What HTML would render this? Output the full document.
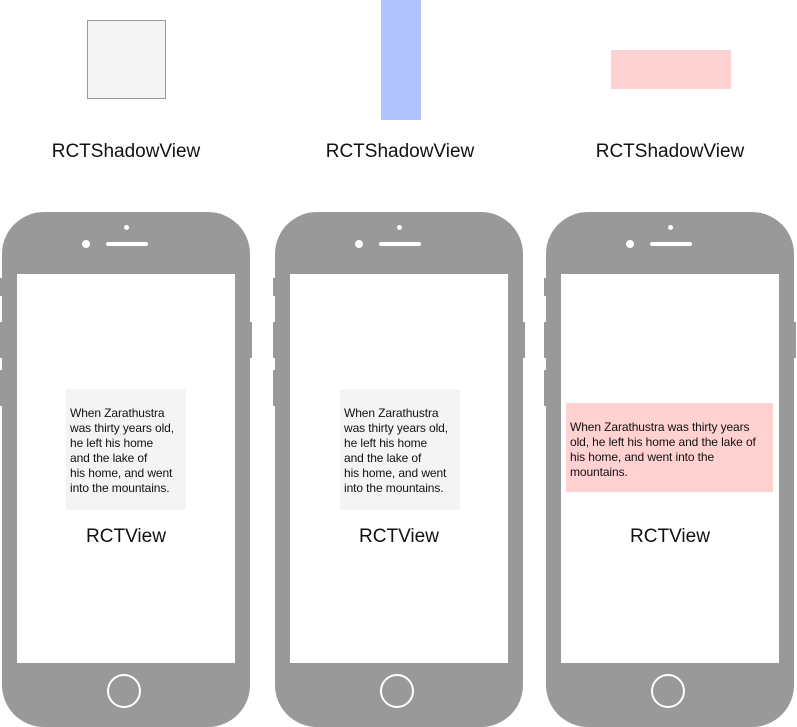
<!DOCTYPE html><html><head><style>
body{margin:0;width:797px;height:727px;background:#fff;position:relative;overflow:hidden;font-family:"Liberation Sans",sans-serif;color:#111}
.a{position:absolute}
.lbl{position:absolute;font-size:19px;width:200px;text-align:center;line-height:22px}
.ph{position:absolute;top:212px;width:248px;height:515px;background:#999;border-radius:42px}
.scr{position:absolute;left:15px;top:62px;width:218px;height:389px;background:#fff}
.home{position:absolute;left:105px;top:462px;width:34px;height:34px;border:2px solid #fff;border-radius:50%;box-sizing:border-box}
.cam{position:absolute;left:80px;top:28px;width:8px;height:8px;border-radius:50%;background:#fff}
.spk{position:absolute;left:104px;top:30px;width:42px;height:4px;border-radius:2px;background:#fff}
.dot{position:absolute;left:122px;top:13px;width:5px;height:5px;border-radius:50%;background:#fff}
.btn{position:absolute;width:3px;background:#999}
.txt{position:absolute;font-size:12px;line-height:15px;padding:17px 3px 0 4px;box-sizing:border-box;letter-spacing:-0.1px}
</style></head><body>
<div class="a" style="left:87px;top:20px;width:79px;height:79px;background:#f4f4f4;border:1px solid #999;box-sizing:border-box"></div>
<div class="a" style="left:381px;top:0;width:40px;height:120px;background:#b3c3ff"></div>
<div class="a" style="left:611px;top:50px;width:120px;height:39px;background:#ffd1d1"></div>
<div class="lbl" style="left:26px;top:141px">RCTShadowView</div>
<div class="lbl" style="left:300px;top:141px">RCTShadowView</div>
<div class="lbl" style="left:570px;top:141px">RCTShadowView</div>

<div class="ph" style="left:2px"><div class="scr"></div><div class="home"></div><div class="cam"></div><div class="spk"></div><div class="dot"></div></div>
<div class="btn" style="left:0;top:278px;height:18px"></div><div class="btn" style="left:0;top:322px;height:36px"></div><div class="btn" style="left:0;top:370px;height:36px"></div><div class="btn" style="left:249px;top:322px;height:36px"></div>
<div class="txt" style="left:66px;top:389px;width:120px;height:121px;background:#f4f4f4">When Zarathustra<br>was thirty years old,<br>he left his home<br>and the lake of<br>his home, and went<br>into the mountains.</div>
<div class="lbl" style="left:26px;top:526px">RCTView</div>

<div class="ph" style="left:275px"><div class="scr"></div><div class="home"></div><div class="cam"></div><div class="spk"></div><div class="dot"></div></div>
<div class="btn" style="left:273px;top:278px;height:18px"></div><div class="btn" style="left:273px;top:322px;height:36px"></div><div class="btn" style="left:273px;top:370px;height:36px"></div><div class="btn" style="left:522px;top:322px;height:36px"></div>
<div class="txt" style="left:340px;top:389px;width:120px;height:121px;background:#f4f4f4">When Zarathustra<br>was thirty years old,<br>he left his home<br>and the lake of<br>his home, and went<br>into the mountains.</div>
<div class="lbl" style="left:299px;top:526px">RCTView</div>

<div class="ph" style="left:546px"><div class="scr"></div><div class="home"></div><div class="cam"></div><div class="spk"></div><div class="dot"></div></div>
<div class="btn" style="left:544px;top:278px;height:18px"></div><div class="btn" style="left:544px;top:322px;height:36px"></div><div class="btn" style="left:544px;top:370px;height:36px"></div><div class="btn" style="left:793px;top:322px;height:36px"></div>
<div class="txt" style="left:566px;top:403px;width:207px;height:89px;background:#ffd1d1">When Zarathustra was thirty years<br>old, he left his home and the lake of<br>his home, and went into the<br>mountains.</div>
<div class="lbl" style="left:570px;top:526px">RCTView</div>
</body></html>
